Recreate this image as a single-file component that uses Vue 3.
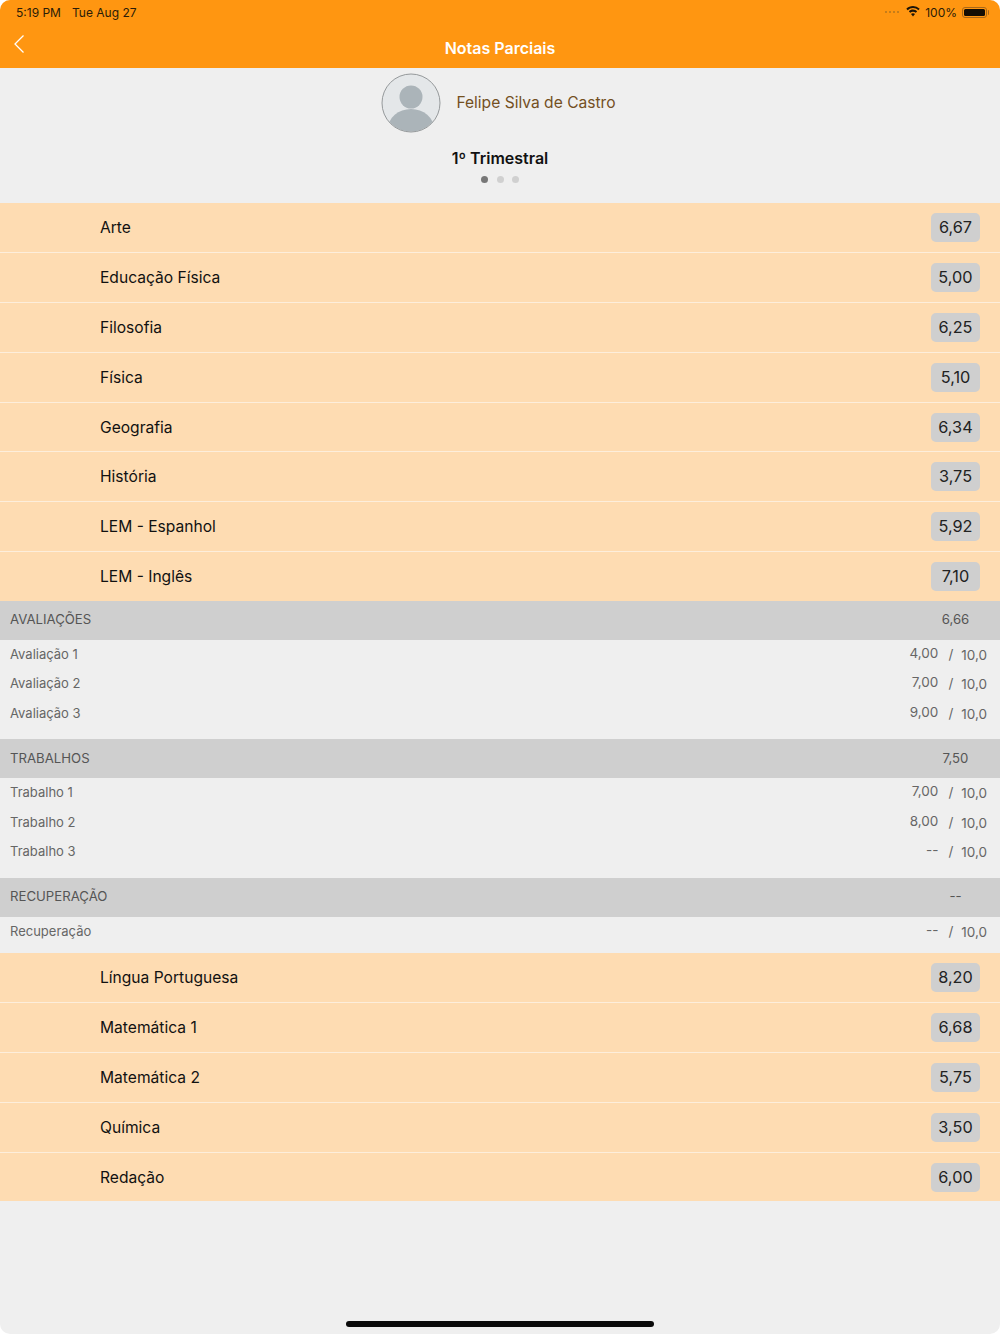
<template>
  <div class="screen">
    <header class="topbar">
      <div class="status">
        <div class="status__left">
          <span>5:19 PM</span>
          <span>Tue Aug 27</span>
        </div>
        <div class="status__right">
          <span class="signal"><i></i><i></i><i></i><i></i></span>
          <svg class="wifi" width="14" height="11" viewBox="0 0 14 11">
            <path d="M7 0C4.500 0 2.100 1 .3 2.700l1.400 1.500A7.600 7.600 0 0 1 7 2.100c2 0 3.900.8 5.300 2.100l1.400-1.500A10 10 0 0 0 7 0z" fill="#1c1408" />
            <path d="M7 3.600c-1.600 0-3.100.6-4.200 1.700l1.400 1.500A4.100 4.100 0 0 1 7 5.700c1.100 0 2.100.4 2.800 1.100l1.400-1.500A6.100 6.100 0 0 0 7 3.600z" fill="#1c1408" />
            <path d="M7 7.200c-.8 0-1.500.3-2 .8L7 10.600 9 8c-.5-.5-1.200-.8-2-.8z" fill="#1c1408" />
          </svg>
          <span>100%</span>
          <span class="battery"><b></b></span>
        </div>
      </div>
      <div class="nav">
        <svg class="nav__back" width="12" height="20" viewBox="0 0 12 20">
          <path d="M10.500 1.500L2 10l8.500 8.500" fill="none" stroke="#fff" stroke-width="1.300" />
        </svg>
        <h1>Notas Parciais</h1>
      </div>
    </header>

    <section class="student">
      <div class="student__who">
        <svg class="avatar" width="60" height="60" viewBox="0 0 60 60">
          <defs>
            <clipPath id="avatar-clip"><circle cx="30" cy="30" r="28.500" /></clipPath>
          </defs>
          <circle cx="30" cy="30" r="29" fill="#e4e7e9" />
          <g clip-path="url(#avatar-clip)" fill="#abb4b9">
            <circle cx="30" cy="24" r="11.500" />
            <ellipse cx="30" cy="56" rx="23" ry="20" />
          </g>
          <circle cx="30" cy="30" r="29" fill="none" stroke="#95999b" stroke-width="1" />
        </svg>
        <span class="student__name">Felipe Silva de Castro</span>
      </div>
      <div class="student__term">1º Trimestral</div>
      <div class="dots">
        <i class="on"></i><i></i><i></i>
      </div>
    </section>

    <ul class="subjects">
      <li v-for="item in subjectsTop" :key="item.name" class="subject">
        <span>{{ item.name }}</span>
        <span class="grade">{{ item.grade }}</span>
      </li>
    </ul>

    <section v-for="group in groups" :key="group.title" class="group">
      <div class="group__head">
        <span>{{ group.title }}</span>
        <span class="group__avg">{{ group.average }}</span>
      </div>
      <div class="group__body">
        <div v-for="row in group.rows" :key="row.name" class="group__row">
          <span>{{ row.name }}</span>
          <span class="score">
            <span class="score__value">{{ row.value }}</span>
            <span class="score__slash">/</span>
            <span class="score__max">10,0</span>
          </span>
        </div>
      </div>
    </section>

    <ul class="subjects subjects--lower">
      <li v-for="item in subjectsBottom" :key="item.name" class="subject">
        <span>{{ item.name }}</span>
        <span class="grade">{{ item.grade }}</span>
      </li>
    </ul>

    <div class="home-bar"></div>
  </div>
</template>

<script setup>
const subjectsTop = [
  { name: 'Arte', grade: '6,67' },
  { name: 'Educação Física', grade: '5,00' },
  { name: 'Filosofia', grade: '6,25' },
  { name: 'Física', grade: '5,10' },
  { name: 'Geografia', grade: '6,34' },
  { name: 'História', grade: '3,75' },
  { name: 'LEM - Espanhol', grade: '5,92' },
  { name: 'LEM - Inglês', grade: '7,10' }
]

const subjectsBottom = [
  { name: 'Língua Portuguesa', grade: '8,20' },
  { name: 'Matemática 1', grade: '6,68' },
  { name: 'Matemática 2', grade: '5,75' },
  { name: 'Química', grade: '3,50' },
  { name: 'Redação', grade: '6,00' }
]

const groups = [
  {
    title: 'AVALIAÇÕES',
    average: '6,66',
    rows: [
      { name: 'Avaliação 1', value: '4,00' },
      { name: 'Avaliação 2', value: '7,00' },
      { name: 'Avaliação 3', value: '9,00' }
    ]
  },
  {
    title: 'TRABALHOS',
    average: '7,50',
    rows: [
      { name: 'Trabalho 1', value: '7,00' },
      { name: 'Trabalho 2', value: '8,00' },
      { name: 'Trabalho 3', value: '--' }
    ]
  },
  {
    title: 'RECUPERAÇÃO',
    average: '--',
    rows: [{ name: 'Recuperação', value: '--' }]
  }
]
</script>

<style>
body {
  background: #fff;
}
</style>

<style scoped>
.screen {
  display: flex;
  flex-direction: column;
  height: 1334px;
  overflow: hidden;
  border-radius: 10px;
  background: #efefef;
  font-family: Inter, "Liberation Sans", sans-serif;
  color: #111;
}

.topbar {
  height: 68px;
  background: #ff9611;
  flex-shrink: 0;
}

.status {
  display: flex;
  justify-content: space-between;
  align-items: center;
  height: 24px;
  padding: 0 10px 0 16px;
  font-size: 12px;
  color: #2a1c08;
}

.status__left {
  display: flex;
  gap: 11px;
}

.status__right {
  display: flex;
  align-items: center;
  gap: 5px;
}

.signal {
  display: flex;
  gap: 1.500px;
  margin-right: 2px;
}

.signal i {
  width: 2.500px;
  height: 2.500px;
  border-radius: 50%;
  background: #b3741c;
}

.wifi {
  margin-top: -1px;
}

.battery {
  position: relative;
  display: block;
  width: 25px;
  height: 11px;
  margin-right: 3px;
  box-sizing: border-box;
  border: 1px solid #a8681a;
  border-radius: 3px;
  padding: 1px;
}

.battery::after {
  content: "";
  position: absolute;
  right: -3px;
  top: 2px;
  width: 1.500px;
  height: 5px;
  border-radius: 0 1px 1px 0;
  background: #a8681a;
}

.battery b {
  display: block;
  height: 100%;
  border-radius: 1.500px;
  background: #150e04;
}

.nav {
  position: relative;
  height: 44px;
  display: flex;
  justify-content: center;
  align-items: center;
  padding-top: 3px;
  box-sizing: border-box;
}

.nav h1 {
  margin: 0;
  font-size: 16px;
  font-weight: 600;
  color: #fff;
}

.nav__back {
  position: absolute;
  left: 13px;
  top: 10px;
}

.student {
  height: 135px;
  flex-shrink: 0;
  display: flex;
  flex-direction: column;
  align-items: center;
  padding-top: 5px;
  box-sizing: border-box;
}

.student__who {
  display: flex;
  align-items: center;
  gap: 15px;
  height: 60px;
  padding-right: 3px;
}

.student__name {
  font-size: 15.600px;
  color: #74501f;
  margin-top: -1px;
}

.student__term {
  margin-top: 15px;
  font-size: 16px;
  font-weight: 600;
  line-height: 20px;
}

.dots {
  display: flex;
  gap: 8.500px;
  margin-top: 8px;
}

.dots i {
  width: 7px;
  height: 7px;
  border-radius: 50%;
  background: #d0d0d0;
}

.dots i.on {
  background: #777;
}

.subjects {
  margin: 0;
  padding: 0;
  list-style: none;
  background: #fedcb2;
  flex-shrink: 0;
}

.subject {
  display: flex;
  justify-content: space-between;
  align-items: center;
  box-sizing: border-box;
  height: 49.900px;
  padding: 0 20px 0 100px;
  font-size: 15.600px;
  border-bottom: 1px solid #fdeedb;
}

.subject:last-child {
  height: 48.500px;
  border-bottom: none;
}

.subjects--lower .subject {
  height: 50px;
  padding-top: 1px;
}

.subjects--lower .subject:last-child {
  height: 48.200px;
}

.grade {
  width: 49px;
  height: 29px;
  border-radius: 5px;
  background: #cfcfcf;
  text-align: center;
  line-height: 29px;
  font-size: 16.300px;
  color: #222;
}

.group {
  flex-shrink: 0;
}

.group:last-of-type .group__body {
  padding-bottom: 6.500px;
}

.group__head {
  display: flex;
  justify-content: space-between;
  align-items: center;
  box-sizing: border-box;
  height: 39px;
  padding: 0 20px 2px 10px;
  background: #cfcfcf;
  font-size: 13.200px;
  color: #555;
}

.group__avg {
  width: 49px;
  text-align: center;
}

.group__body {
  padding: 0 13px 11px 10px;
}

.group__row {
  display: flex;
  justify-content: space-between;
  align-items: center;
  box-sizing: border-box;
  height: 29.500px;
  padding-bottom: 1.500px;
  font-size: 13px;
  color: #666;
}

.score {
  display: flex;
  align-items: center;
  font-size: 13.500px;
}

.score__value {
  position: relative;
  top: -1px;
}

.score__slash {
  margin: 0 8px 0 10px;
}

.score__max {
  position: relative;
  top: 1px;
}

.home-bar {
  width: 308px;
  height: 6px;
  border-radius: 3px;
  background: #0a0a0a;
  margin: auto auto 7px;
}
</style>
